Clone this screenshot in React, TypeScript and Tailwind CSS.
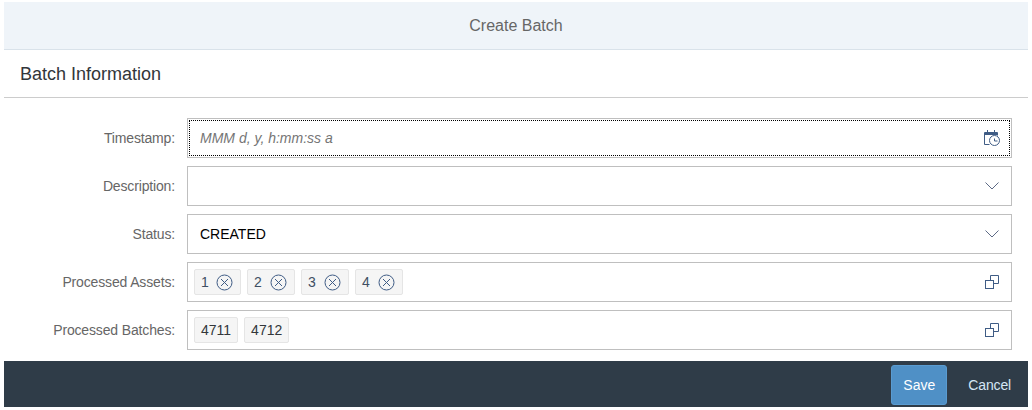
const FONT = "font-['Liberation_Sans',sans-serif]"

function Calendar() {
  return (
    <svg className="ml-px" width="16" height="16" viewBox="0 0 16 16" fill="none" stroke="#3f5c85" strokeWidth="1">
      <path d="M5.5 14.5H0.5V2.5H13.5V5.5" />
      <path d="M0.5 4H13.5" strokeWidth="2" />
      <path d="M3.5 0V3M10.5 0V3" />
      <circle cx="10.5" cy="10.5" r="5" />
      <path d="M10.5 8.5V11H13.5" />
    </svg>
  )
}

function Chevron() {
  return (
    <svg width="14" height="8" viewBox="0 0 14 8" fill="none" stroke="#5d6a85" strokeWidth="1">
      <path d="M0.5 0.5L7 7L13.5 0.5" />
    </svg>
  )
}

function ValueHelp() {
  return (
    <svg width="14" height="14" viewBox="0 0 14 14" fill="none" stroke="#3f5c85" strokeWidth="1">
      <rect x="0.5" y="5.5" width="8" height="8" />
      <path d="M5.5 5.5V0.5H13.5V8.5H8.5" />
    </svg>
  )
}

function Remove() {
  return (
    <svg width="17" height="17" viewBox="0 0 17 17" fill="none" stroke="#3f5c85" strokeWidth="1">
      <circle cx="8.5" cy="8.5" r="7.5" />
      <path d="M5 5L12 12M12 5L5 12" />
    </svg>
  )
}

function Row({ label, focused, children, icon }: { label: string; focused?: boolean; children?: React.ReactNode; icon?: React.ReactNode }) {
  return (
    <div className="flex items-center h-10">
      <label className="w-[171px] text-right text-sm tracking-[-0.15px] text-[#666666]">{label}</label>
      <div className="ml-3 w-[825px] h-10 border border-[#bfbfbf] p-px">
        <div className={`flex items-center h-full pl-2.5 pr-[9px] border border-dotted ${focused ? 'border-black' : 'border-transparent'}`}>
          <div className="flex-1 flex items-center gap-1.5 min-w-0">{children}</div>
          <div className="flex justify-center w-[17px]">{icon}</div>
        </div>
      </div>
    </div>
  )
}

function AssetChip({ text }: { text: string }) {
  return (
    <div className="flex items-center justify-between w-12 first:w-[47px] h-[26px] pl-1.5 pr-[7px] bg-[#f5f5f5] border border-[#e5e5e5] rounded-[2px] text-sm text-[#3f4f63]">
      <span>{text}</span>
      <Remove />
    </div>
  )
}

function BatchChip({ text }: { text: string }) {
  return (
    <div className="flex items-center h-[26px] px-1.5 bg-[#f5f5f5] border border-[#e5e5e5] rounded-[2px] text-sm text-[#32363a]">
      {text}
    </div>
  )
}

export default function App() {
  return (
    <div className={`w-[1032px] h-[410px] bg-white px-1 pt-0.5 ${FONT}`}>
      <div className="flex items-center justify-center h-12 bg-[#eff4f9] border-b border-[#d9e2ea] text-[#666666] text-base">
        Create Batch
      </div>

      <div className="flex items-center h-12 px-4 border-b border-[#cccccc] text-[#32363a] text-lg">
        Batch Information
      </div>

      <div className="flex flex-col gap-2 pt-5 h-[263px]">
        <Row label="Timestamp:" focused icon={<Calendar />}>
          <span className="text-sm italic text-[#757575]">MMM d, y, h:mm:ss a</span>
        </Row>
        <Row label="Description:" icon={<Chevron />} />
        <Row label="Status:" icon={<Chevron />}>
          <span className="text-sm text-black">CREATED</span>
        </Row>
        <Row label="Processed Assets:" icon={<ValueHelp />}>
          <div className="flex items-center gap-1.5 -ml-1.5">
            {['1', '2', '3', '4'].map((n) => (
              <AssetChip key={n} text={n} />
            ))}
          </div>
        </Row>
        <Row label="Processed Batches:" icon={<ValueHelp />}>
          <div className="flex items-center gap-1.5 -ml-1.5">
            <BatchChip text="4711" />
            <BatchChip text="4712" />
          </div>
        </Row>
      </div>

      <div className="flex items-center justify-end h-[46px] bg-[#2f3c48] pr-[17px]">
        <button className="w-14 h-10 mt-px bg-[#4f90c6] border border-[#5a9bd0] rounded-[3px] text-sm text-white">Save</button>
        <button className="ml-[21px] mt-px text-sm tracking-[-0.15px] text-[#d5e6f5]">Cancel</button>
      </div>
    </div>
  )
}
